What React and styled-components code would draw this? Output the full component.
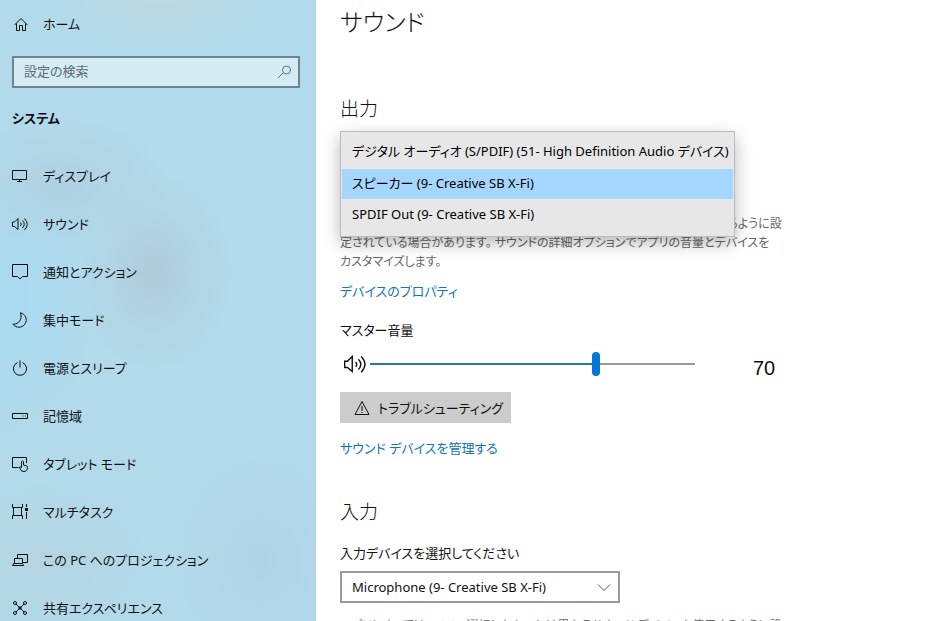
import React, { useState } from 'react'
import styled, { createGlobalStyle, ThemeProvider } from 'styled-components'

const theme = {
  text: '#111',
  muted: '#666',
  link: '#0f76b0',
  accent: '#0078d7',
  track: '#2a7598',
  line: '#999',
  selected: '#a5d6ff',
  popup: '#e7e7e7',
  fontsm: '12px',
  fontmd: '13px',
  fontlg: '19px',
  fontvol: '20px',
  fontxl: '24px',
}

const GlobalStyle = createGlobalStyle`
  * {
    box-sizing: border-box;
  }
  body {
    margin: 0;
    overflow: hidden;
    background: #fff;
  }
  body, button, input, select {
    font-family: 'Noto Sans', 'Noto Sans CJK JP', sans-serif;
    font-size: ${theme.fontmd};
    font-feature-settings: 'palt';
    color: ${theme.text};
  }
  h1, h2, p, ul {
    margin: 0;
    padding: 0;
  }
`
const Page = styled.div`
  display: flex;
  height: 100vh;
  overflow: hidden;
`
const Sidebar = styled.aside`
  flex: 0 0 316px;
  overflow: hidden;
  background:
    radial-gradient(ellipse 80px 100px at 154px 272px, rgba(174, 196, 206, 0.7), rgba(174, 200, 212, 0.3) 50%, rgba(178, 210, 226, 0)),
    radial-gradient(ellipse 120px 60px at 160px -10px, rgba(190, 214, 216, 0.7), rgba(190, 214, 216, 0)),
    radial-gradient(ellipse 110px 70px at 60px 186px, rgba(174, 206, 222, 0.7), rgba(174, 206, 222, 0)),
    radial-gradient(ellipse 110px 80px at 40px 560px, rgba(180, 210, 220, 0.7), rgba(180, 210, 220, 0)),
    radial-gradient(ellipse 90px 110px at 262px 560px, rgba(176, 208, 228, 0.8), rgba(176, 208, 228, 0)),
    radial-gradient(ellipse 110px 160px at 0 300px, rgba(168, 218, 242, 0.9), rgba(168, 218, 242, 0)),
    #b2daea;
`
const NavLink = styled.a`
  display: flex;
  align-items: center;
  gap: 15px;
  height: 48px;
  padding: 0 12px;
  color: ${({theme}) => theme.text};
  text-decoration: none;
  white-space: nowrap;
`
const NavLabel = styled.span`
  padding-bottom: 2px;
`
const NavList = styled.ul`
  list-style: none;
  margin-top: 24px;
`
const SearchBox = styled.label`
  display: flex;
  align-items: center;
  height: 32px;
  margin: 8px 16px 0 12px;
  padding: 0 6px 2px 10px;
  border: 2px solid #6b8491;
  background: rgba(255, 255, 255, 0.45);
  color: #60727c;
`
const SearchInput = styled.input`
  flex: 1;
  min-width: 0;
  padding: 0;
  border: 0;
  outline: 0;
  background: none;
  &::placeholder {
    color: #5c6c75;
    opacity: 1;
  }
`
const SideTitle = styled.h2`
  margin: 20px 12px 0;
  font-size: ${({theme}) => theme.fontmd};
  font-weight: 600;
  line-height: 20px;
`
const Glyph = styled.svg`
  flex: none;
  width: ${({$size}) => $size}px;
  height: ${({$size}) => $size}px;
  fill: none;
  stroke: currentColor;
  stroke-width: 1;
`
const Main = styled.main`
  flex: 1;
  min-width: 0;
  padding: 4px 24px 0;
`
const Title = styled.h1`
  font-size: ${({theme}) => theme.fontxl};
  font-weight: 300;
  line-height: 36px;
`
const Section = styled.section`
  display: flex;
  flex-direction: column;
  align-items: flex-start;
  margin-top: ${({$top}) => $top}px;
`
const Heading = styled.h2`
  font-size: ${({theme}) => theme.fontlg};
  font-weight: 300;
  line-height: 28px;
`
const Field = styled.div`
  position: relative;
  align-self: stretch;
  height: 83px;
  margin-top: 8px;
`
const Popup = styled.select`
  position: absolute;
  top: 0;
  left: 0;
  z-index: 1;
  width: 395px;
  height: 106px;
  padding: 4px 1px;
  overflow: hidden;
  appearance: none;
  border: 1px solid #bbb;
  border-radius: 0;
  outline: 0;
  background: ${({theme}) => theme.popup};
  box-shadow: 0 6px 16px rgba(0, 0, 0, 0.28);
  option {
    height: 30px;
    margin: 1px 0 2px;
    padding: 4px 10px 0;
    color: #000;
  }
  option:checked {
    color: #000;
    background: ${({theme}) => theme.selected} linear-gradient(${({theme}) => theme.selected}, ${({theme}) => theme.selected});
  }
`
const Hint = styled.p`
  margin-top: ${({$top}) => $top || 0}px;
  font-size: ${({theme}) => theme.fontsm};
  line-height: 19px;
  color: ${({theme}) => theme.muted};
  white-space: nowrap;
`
const TextLink = styled.a`
  margin-top: ${({$top}) => $top}px;
  line-height: 20px;
  color: ${({theme}) => theme.link};
  text-decoration: none;
`
const Label = styled.label`
  margin-top: ${({$top}) => $top}px;
  line-height: 20px;
`
const VolumeRow = styled.div`
  display: flex;
  align-items: center;
  align-self: stretch;
  height: 24px;
  margin-top: 12px;
  padding-left: 4px;
  gap: 4px;
`
const Slider = styled.input`
  flex: 0 1 325px;
  min-width: 0;
  height: 24px;
  margin: 0;
  appearance: none;
  background: none;
  &::-webkit-slider-runnable-track {
    height: 2px;
    background: linear-gradient(
      to right,
      ${({theme}) => theme.track} var(--fill),
      ${({theme}) => theme.line} var(--fill)
    );
  }
  &::-webkit-slider-thumb {
    appearance: none;
    width: 8px;
    height: 24px;
    margin-top: -11px;
    border-radius: 4px;
    background: ${({theme}) => theme.accent};
  }
`
const Volume = styled.output`
  align-self: flex-end;
  margin-left: 54px;
  font-family: 'Liberation Sans', sans-serif;
  font-size: ${({theme}) => theme.fontvol};
  line-height: 16px;
`
const Button = styled.button`
  display: flex;
  align-items: center;
  gap: 8px;
  height: 31px;
  margin-top: 16px;
  padding: 0 8px 0 14px;
  border: 0;
  background: #ccc;
  white-space: nowrap;
`
const SelectBox = styled.div`
  display: grid;
  grid-template-columns: 1fr 22px;
  align-items: center;
  width: 280px;
  height: 32px;
  margin-top: 8px;
  border: 2px solid ${({theme}) => theme.line};
  color: #555;
  svg {
    grid-area: 1 / 2;
    pointer-events: none;
  }
`
const Select = styled.select`
  grid-area: 1 / 1 / 2 / 3;
  height: 28px;
  padding: 0 24px 0 10px;
  appearance: none;
  border: 0;
  border-radius: 0;
  outline: 0;
  background: none;
`

const shapes = {
  home: <path d='M2.500 9 9 2.500 15.500 9M4.500 7.500v7h3v-5h3v5h3v-7' />,
  search: <path d='M2 15l5-5M6.500 7a4 4 0 1 0 8 0a4 4 0 1 0-8 0' />,
  display: <path d='M.5 2.500h14v9H.5zM7.500 11.500v2M5 13.500h5' />,
  sound: <path d='M.5 6v4.500h2l3.500 3v-11L2.500 6zM8.500 6.500q1.500 1.700 0 3.500M10.500 4.500q3.500 3.700 0 7.500M12.500 2.500q5.500 5.700 0 11.500' />,
  bubble: <path d='M.5 .5h15v12h-5L8 15l-2.500-2.500h-5z' />,
  moon: <path d='M8.500 .8a7.300 7.300 0 1 1-7.500 11.400C7 12.500 10.500 7 8.500 .8z' />,
  power: <path d='M5.500 2.600a6.600 6.600 0 1 0 5 0M8 .5v7' />,
  storage: <path d='M.5 5.500h15v5H.5zM10.500 8h1M13 8h1' />,
  tablet: (
    <>
      <path d='M6.500 11.500H.5v-10h14V7' />
      <path d='M9.500 11.500V5.500q1-1.500 2 0V9l3 .8q1 .4 1 1.400c0 3-1.500 4.300-3.500 4.300-3 0-4-2-4.500-4.500q1-.8 2 1' />
    </>
  ),
  multitask: (
    <>
      <path d='M.5 0v3.500h10V0M.5 15v-3.500h10V15M1.500 3.500v8M9.500 3.500v8M14.500 0v3M14.500 8v7' />
      <path d='M13 4h3v3h-3z' fill='currentColor' stroke='none' />
    </>
  ),
  project: <path d='M5.500 6V2.500h10v8H11M2.500 11V6.500h8V11M1.500 11.500h9l1 2H.5z' />,
  shared: (
    <path d='M4 4l8 8M12 4l-8 8M1.500 3a1.500 1.500 0 1 0 3 0a1.500 1.500 0 1 0-3 0M11.500 3a1.500 1.500 0 1 0 3 0a1.500 1.500 0 1 0-3 0M1.500 13a1.500 1.500 0 1 0 3 0a1.500 1.500 0 1 0-3 0M11.500 13a1.500 1.500 0 1 0 3 0a1.500 1.500 0 1 0-3 0M6.500 8L8 6.500 9.500 8 8 9.500z' />
  ),
  warning: <path d='M8 1.500 15 14.500H1zM8 6v5M8 12v1' />,
  chevron: <path d='M2 5.500l6 6 6-6' />,
}

const Icon = ({name, size = 16}) => (
  <Glyph viewBox='0 0 16 16' $size={size} aria-hidden='true'>{shapes[name]}</Glyph>
)

const NavItem = ({icon, label}) => {
  return (
    <NavLink href='#'>
      <Icon name={icon} />
      <NavLabel>{label}</NavLabel>
    </NavLink>
  )
}

const pages = [
  ['display', 'ディスプレイ'],
  ['sound', 'サウンド'],
  ['bubble', '通知とアクション'],
  ['moon', '集中モード'],
  ['power', '電源とスリープ'],
  ['storage', '記憶域'],
  ['tablet', 'タブレット モード'],
  ['multitask', 'マルチタスク'],
  ['project', 'この PC へのプロジェクション'],
  ['shared', '共有エクスペリエンス'],
]

const outputs = [
  'デジタル オーディオ (S/PDIF) (51- High Definition Audio デバイス)',
  'スピーカー (9- Creative SB X-Fi)',
  'SPDIF Out (9- Creative SB X-Fi)',
]

const DeviceHint = ({top}) => (
  <Hint $top={top}>
    アプリによっては、 ここで選択したものとは異なるサウンド デバイスを使用するように設<br />
    定されている場合があります。 サウンドの詳細オプションでアプリの音量とデバイスを<br />
    カスタマイズします。
  </Hint>
)

export default function App() {
  const [output, setOutput] = useState(outputs[1])
  const [volume, setVolume] = useState(70)

  return (
    <ThemeProvider theme={theme}>
      <GlobalStyle />
      <Page>
        <Sidebar>
          <NavItem icon='home' label='ホーム' />
          <SearchBox>
            <SearchInput type='text' placeholder='設定の検索' aria-label='設定の検索' />
            <Icon name='search' />
          </SearchBox>
          <SideTitle>システム</SideTitle>
          <NavList>
            {pages.map(([icon, label]) => (
              <li key={icon}><NavItem icon={icon} label={label} /></li>
            ))}
          </NavList>
        </Sidebar>
        <Main>
          <Title>サウンド</Title>
          <Section $top={55}>
            <Heading>出力</Heading>
            <Field>
              <Popup size={3} aria-label='出力' value={output} onChange={(e) => setOutput(e.target.value)}>
                {outputs.map((name) => <option key={name}>{name}</option>)}
              </Popup>
            </Field>
            <DeviceHint />
            <TextLink href='#' $top={10}>デバイスのプロパティ</TextLink>
            <Label htmlFor='volume' $top={19}>マスター音量</Label>
            <VolumeRow>
              <Icon name='sound' size={22} />
              <Slider
                id='volume'
                type='range'
                value={volume}
                onChange={(e) => setVolume(Number(e.target.value))}
                style={{'--fill': `${volume}%`}}
              />
              <Volume htmlFor='volume'>{volume}</Volume>
            </VolumeRow>
            <Button type='button'>
              <Icon name='warning' />
              トラブルシューティング
            </Button>
            <TextLink href='#' $top={15}>サウンド デバイスを管理する</TextLink>
          </Section>
          <Section $top={40}>
            <Heading>入力</Heading>
            <Label htmlFor='input-device' $top={17}>入力デバイスを選択してください</Label>
            <SelectBox>
              <Select id='input-device'>
                <option>Microphone (9- Creative SB X-Fi)</option>
              </Select>
              <Icon name='chevron' />
            </SelectBox>
            <DeviceHint top={13} />
          </Section>
        </Main>
      </Page>
    </ThemeProvider>
  )
}
